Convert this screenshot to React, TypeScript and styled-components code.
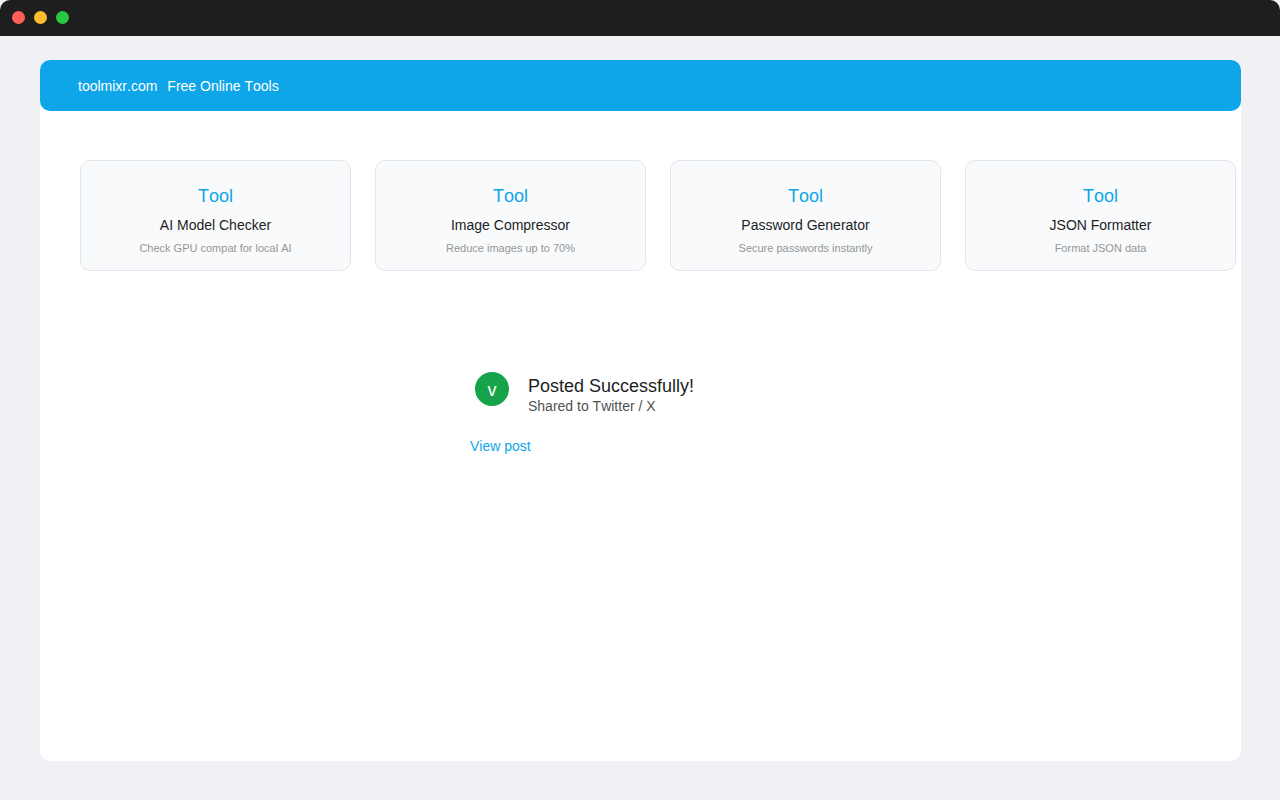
import React from "react";
import styled, { createGlobalStyle } from "styled-components";

const GlobalStyle = createGlobalStyle`
  * { box-sizing: border-box; }
  body {
    margin: 0;
    background: #f0f1f5;
    color: #1e1e1e;
    font-family: "Liberation Sans", Arial, sans-serif;
    font-kerning: none;
  }
  h1, h2, p { margin: 0; font-weight: 400; }
`;

const Page = styled.div`
  min-height: 100vh;
  display: flex;
  flex-direction: column;
`;

const TitleBar = styled.div`
  display: flex;
  align-items: center;
  gap: 9px;
  height: 36px;
  padding: 0 12px 1px;
  background: #1e1e1e;
  border-radius: 10px 10px 0 0;
`;

const Dot = styled.span<{ $color: string }>`
  width: 13px;
  height: 13px;
  border-radius: 50%;
  background: ${(p) => p.$color};
`;

const Sheet = styled.div`
  flex: 1;
  margin: 24px 39px 39px 40px;
  background: #ffffff;
  border-radius: 10px;
`;

const Header = styled.header`
  display: flex;
  align-items: center;
  gap: 10px;
  height: 51px;
  padding: 0 38px;
  border-radius: 10px;
  background: #0fa5e9;
  color: #ffffff;
  font-size: 14px;
  line-height: 16px;
`;

const Brand = styled.h1`
  font-size: 14px;
`;

const Tools = styled.ul`
  display: grid;
  grid-template-columns: repeat(4, 1fr);
  gap: 24px;
  margin: 49px 5px 0 40px;
  padding: 0;
  list-style: none;
`;

const ToolCard = styled.li`
  display: flex;
  flex-direction: column;
  align-items: center;
  height: 111px;
  padding-top: 24px;
  border: 1px solid #e2e5ea;
  border-radius: 10px;
  background: #f8fafc;
  text-align: center;
`;

const Kind = styled.span`
  color: #0fa5e9;
  font-size: 18px;
  line-height: 22px;
`;

const Name = styled.h2`
  margin-top: 10px;
  font-size: 14px;
  line-height: 16px;
`;

const Note = styled.p`
  margin-top: 9px;
  color: #969696;
  font-size: 11px;
  line-height: 12px;
`;

const Result = styled.section`
  display: flex;
  flex-direction: column;
  align-items: flex-start;
  width: 341px;
  margin: 101px auto 0;
`;

const Status = styled.div`
  display: flex;
  gap: 19px;
  padding-left: 5px;
`;

const Badge = styled.span`
  display: flex;
  align-items: center;
  justify-content: center;
  width: 34px;
  height: 34px;
  padding-top: 3px;
  border-radius: 50%;
  background: #16a34a;
  color: #ffffff;
  font-size: 18px;
`;

const Message = styled.div`
  padding-top: 4px;
  white-space: nowrap;
`;

const Heading = styled.h2`
  font-size: 18px;
  line-height: 20px;
`;

const Detail = styled.p`
  margin-top: 2px;
  color: #505050;
  font-size: 14px;
  line-height: 16px;
`;

const PostLink = styled.a`
  margin-top: 24px;
  color: #0fa5e9;
  font-size: 14px;
  line-height: 16px;
  text-decoration: none;
`;

const tools = [
  { name: "AI Model Checker", note: "Check GPU compat for local AI" },
  { name: "Image Compressor", note: "Reduce images up to 70%" },
  { name: "Password Generator", note: "Secure passwords instantly" },
  { name: "JSON Formatter", note: "Format JSON data" },
];

export default function App() {
  return (
    <Page>
      <GlobalStyle />
      <TitleBar>
        <Dot $color="#ff5f57" />
        <Dot $color="#febc2e" />
        <Dot $color="#28c840" />
      </TitleBar>
      <Sheet>
        <Header>
          <Brand>toolmixr.com</Brand>
          <span>Free Online Tools</span>
        </Header>
        <main>
          <Tools>
            {tools.map((tool) => (
              <ToolCard key={tool.name}>
                <Kind>Tool</Kind>
                <Name>{tool.name}</Name>
                <Note>{tool.note}</Note>
              </ToolCard>
            ))}
          </Tools>
          <Result>
            <Status>
              <Badge>v</Badge>
              <Message>
                <Heading>Posted Successfully!</Heading>
                <Detail>Shared to Twitter / X</Detail>
              </Message>
            </Status>
            <PostLink href="#post">View post</PostLink>
          </Result>
        </main>
      </Sheet>
    </Page>
  );
}
